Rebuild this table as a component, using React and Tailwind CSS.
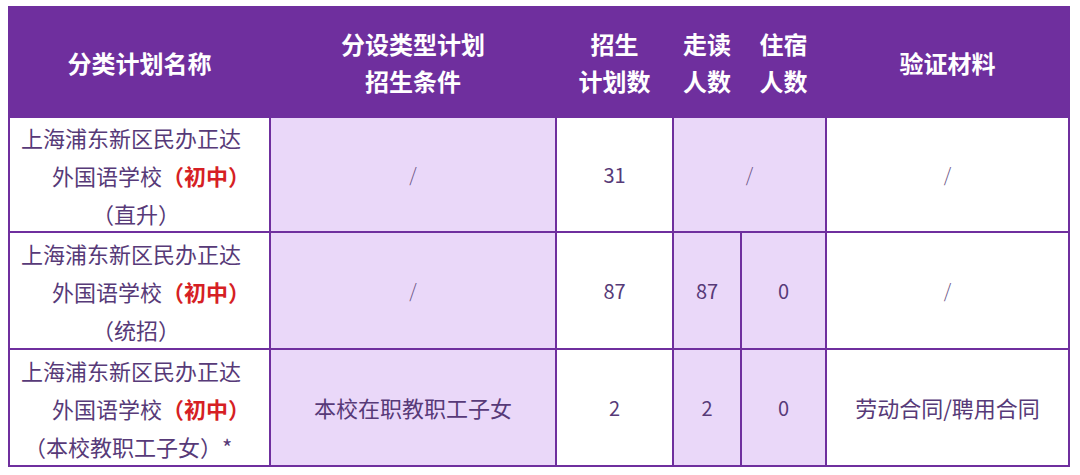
import React from 'react';

const font = { fontFamily: '"Noto Sans CJK SC", "Noto Sans", sans-serif' };

const Red = ({ children }) => <span className="font-bold text-[#d61f24]">{children}</span>;

const NameCell = ({ tail, tailPad }) => (
  <div className="bg-white flex flex-col justify-center text-[22px] leading-[38px] text-[#573a78]">
    <div className="pl-[11px] whitespace-nowrap">上海浦东新区民办正达</div>
    <div className="pl-[42px] whitespace-nowrap">
      外国语学校<Red>（初中）</Red>
    </div>
    <div className={`whitespace-nowrap ${tailPad}`}>{tail}</div>
  </div>
);

const Cell = ({ light, children, className = '' }) => (
  <div
    className={`flex items-center justify-center text-[#573a78] ${
      light ? 'bg-[#ead8f9]' : 'bg-white'
    } ${className}`}
  >
    {children}
  </div>
);

const Slash = () => <span className="text-[19px] font-light text-[#6b5585]">/</span>;

const Head = ({ children }) => (
  <div className="bg-[#6f2f9e] flex items-center justify-center text-center text-white font-bold text-[24px] leading-[37px]">
    <div>{children}</div>
  </div>
);

export default function App() {
  return (
    <div className="w-[1080px] h-[475px] bg-white pt-[6px] pl-[8px]" style={font}>
      <div className="w-[1062px] grid grid-cols-[259px_284px_115px_66px_83px_241px] grid-rows-[108px_113px_115px_115px] gap-[2px] p-[2px] bg-[#6f2f9e]">
        <Head>分类计划名称</Head>
        <Head>
          分设类型计划
          <br />
          招生条件
        </Head>
        <Head>
          招生
          <br />
          计划数
        </Head>
        <Head>
          走读
          <br />
          人数
        </Head>
        <Head>
          住宿
          <br />
          人数
        </Head>
        <Head>验证材料</Head>

        <NameCell tail="（直升）" tailPad="pl-[82px]" />
        <Cell light>
          <Slash />
        </Cell>
        <Cell className="text-[20px]">31</Cell>
        <Cell light className="col-span-2">
          <Slash />
        </Cell>
        <Cell>
          <Slash />
        </Cell>

        <NameCell tail="（统招）" tailPad="pl-[82px]" />
        <Cell light>
          <Slash />
        </Cell>
        <Cell className="text-[20px]">87</Cell>
        <Cell light className="text-[20px]">87</Cell>
        <Cell light className="text-[20px]">0</Cell>
        <Cell>
          <Slash />
        </Cell>

        <NameCell tail="（本校教职工子女）*" tailPad="pl-[14px]" />
        <Cell light className="text-[22px]">本校在职教职工子女</Cell>
        <Cell className="text-[20px]">2</Cell>
        <Cell light className="text-[20px]">2</Cell>
        <Cell light className="text-[20px]">0</Cell>
        <Cell className="text-[22px]">劳动合同/聘用合同</Cell>
      </div>
    </div>
  );
}
